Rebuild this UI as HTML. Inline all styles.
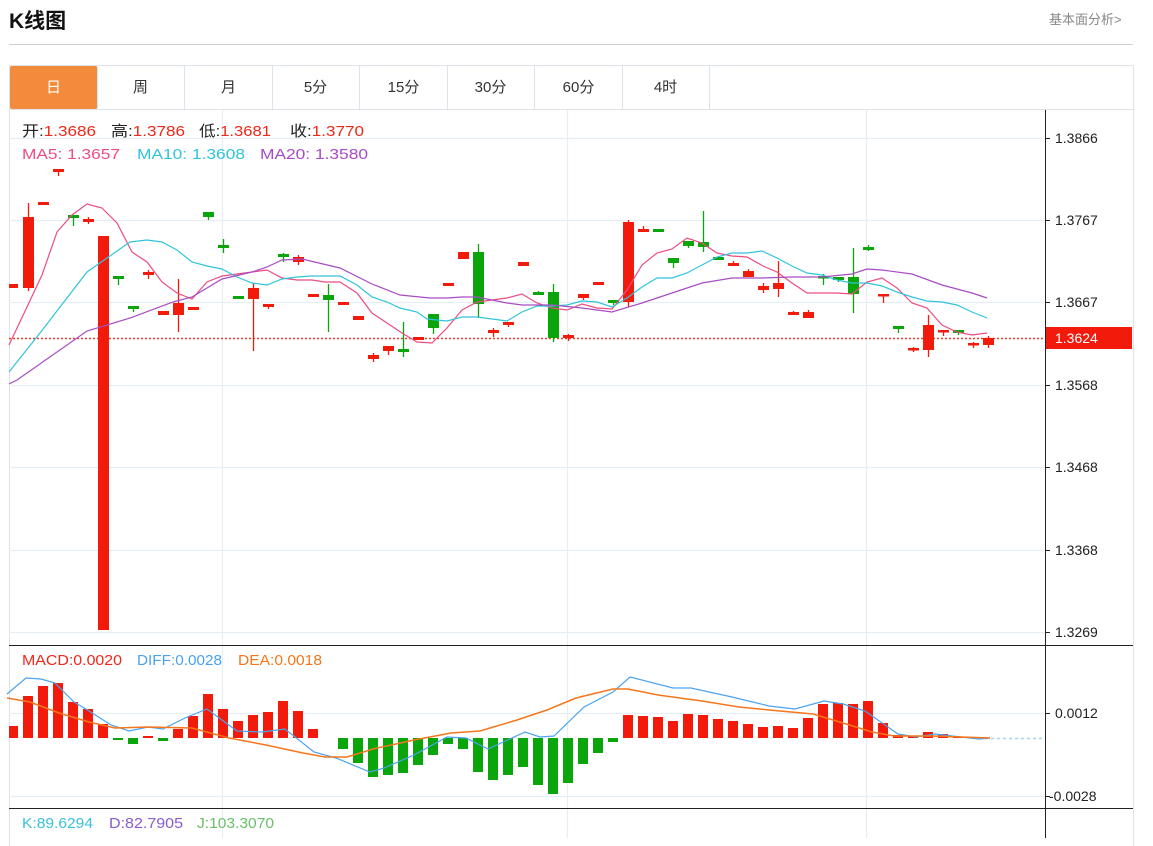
<!DOCTYPE html>
<html><head><meta charset="utf-8">
<style>
body{margin:0;background:#fff;width:1153px;height:838px;overflow:hidden;font-family:"Liberation Sans","Noto Sans CJK SC",sans-serif;position:relative}
.title{position:absolute;left:9px;top:5px;font-size:21px;font-weight:bold;color:#111;letter-spacing:0px}
.more{position:absolute;left:1049px;top:9px;font-size:13px;color:#888}
.hr{position:absolute;left:9px;top:44px;width:1124px;height:1px;background:#d0d0d0}
.box{position:absolute;left:9px;top:65px;width:1123px;height:780px;border:1px solid #dde3e8;border-bottom:none}
.tabs{position:absolute;left:9px;top:65px;height:44px;width:1124px;border-bottom:1px solid #dde3e8}
.tab{position:absolute;top:1px;height:43px;line-height:43px;text-align:center;font-size:15px;color:#333;border-right:1px solid #dde3e8;width:87px}
.tab.on{background:#f28c3c;color:#fff;border-radius:2px}
svg{position:absolute;left:0;top:0}
</style></head><body>
<div class="title">K线图</div>
<div class="more">基本面分析&gt;</div>
<div class="hr"></div>
<div class="box"></div>
<div class="tabs">
<div class="tab on" style="left:1px">日</div>
<div class="tab" style="left:88px">周</div>
<div class="tab" style="left:176px">月</div>
<div class="tab" style="left:263px">5分</div>
<div class="tab" style="left:351px">15分</div>
<div class="tab" style="left:438px">30分</div>
<div class="tab" style="left:526px">60分</div>
<div class="tab" style="left:613px">4时</div>
</div>
<svg id="s" width="1153" height="838" xmlns="http://www.w3.org/2000/svg" font-family="Liberation Sans, Noto Sans CJK SC, sans-serif"></svg>
<script>
var s=document.getElementById('s'),h='';
function L(x1,y1,x2,y2,c,w,d){h+='<line x1="'+x1+'" y1="'+y1+'" x2="'+x2+'" y2="'+y2+'" stroke="'+c+'" stroke-width="'+(w||1)+'"'+(d?' stroke-dasharray="'+d+'"':'')+'/>';}
function T(x,y,t,c,sz){h+='<text x="'+x+'" y="'+y+'" fill="'+c+'" font-size="'+(sz||14)+'">'+t+'</text>';}
function TL(x,y,t,c,len){h+='<text x="'+x+'" y="'+y+'" fill="'+c+'" font-size="15" textLength="'+len+'" lengthAdjust="spacingAndGlyphs">'+t+'</text>';}
function P(pts,c,w){h+='<polyline fill="none" stroke="'+c+'" stroke-width="'+(w||1.2)+'" points="'+pts+'"/>';}
var grid='#e6edf3';
[138,220,302,385,467,550,632,713,796].forEach(function(y){L(9,y+.5,1045,y+.5,grid,1.2);});
[222,567,866].forEach(function(x){L(x+.5,110,x+.5,838,grid,1.2);});
L(1045.5,110,1045.5,838,'#222',1);
L(9,645.5,1133,645.5,'#222',1);
L(9,808.5,1133,808.5,'#222',1);
var labs=[[138,'1.3866'],[220,'1.3767'],[302,'1.3667'],[385,'1.3568'],[467,'1.3468'],[550,'1.3368'],[632,'1.3269'],[713,'0.0012'],[796,'-0.0028']];
labs.forEach(function(a){L(1045,a[0]+.5,1050,a[0]+.5,'#222',1);T(a[1][0]=='-'?1049:1055,a[0]+5,a[1],'#222',14);});
L(9,338.5,1045,338.5,'#f03c2c',1.5,'2,2');
h+='<rect x="1046" y="327" width="86" height="22" fill="#f21a0a"/>';
T(1055,343,'1.3624','#fff',14);
var C=[[284,288,284,288,'r'],[217,288,203,291,'r'],[202,205,202,205,'r'],[169,172,169,176,'r'],[215,218,215,226,'g'],[219,222,217,224,'r'],[236,630,236,630,'r'],[276,279,276,285,'g'],[306,309,306,312,'g'],[272,275,270,279,'r'],[311,315,311,315,'r'],[303,315,279,332,'r'],[307,310,307,310,'r'],[212,217,212,220,'g'],[245,248,239,253,'g'],[296,299,296,299,'g'],[288,299,283,351,'r'],[304,307,304,309,'r'],[254,257,253,262,'g'],[257,262,255,265,'r'],[294,297,294,297,'r'],[295,300,284,332,'g'],[302,305,302,305,'r'],[316,320,316,320,'r'],[355,359,353,362,'r'],[346,351,346,355,'r'],[349,352,322,357,'g'],[337,340,337,340,'r'],[314,328,314,334,'g'],[283,286,283,286,'r'],[252,259,252,259,'r'],[252,304,244,318,'g'],[330,333,328,337,'r'],[322,325,322,327,'r'],[262,266,262,266,'r'],[292,295,291,295,'g'],[292,338,284,342,'g'],[335,338,334,341,'r'],[294,298,294,300,'r'],[282,285,282,285,'r'],[300,303,300,305,'g'],[222,302,220,307,'r'],[229,232,226,232,'r'],[229,232,229,232,'g'],[258,263,258,268,'g'],[241,246,241,248,'g'],[242,247,211,252,'g'],[257,260,257,260,'g'],[263,266,261,266,'r'],[271,277,269,277,'r'],[286,290,283,293,'r'],[283,289,261,297,'r'],[312,315,311,315,'r'],[312,318,310,318,'r'],[276,278,274,285,'g'],[277,280,277,282,'g'],[277,294,248,313,'g'],[247,250,245,251,'g'],[294,296,294,303,'r'],[326,329,326,333,'g'],[348,350,347,352,'r'],[325,350,315,357,'r'],[330,332,330,336,'r'],[330,333,330,335,'g'],[343,345,342,348,'r'],[338,345,336,348,'r']];
var RED='#f21a0a',GRN='#0aa50a';
C.forEach(function(c,i){var x=13+15*i,col=c[4]=='r'?RED:GRN;L(x+.5,c[2],x+.5,c[3],col,1.3);var x0=x-5,w=11;if(i==0){x0=9;w=9;}h+='<rect x="'+x0+'" y="'+c[0]+'" width="'+w+'" height="'+Math.max(2.5,c[1]-c[0])+'" fill="'+col+'"/>';});
P('9,345 27,307 42,275 57,232 72,215 87,204 102,208 117,223 132,252 147,262 162,282 177,293 192,299 207,282 222,276 252,272 267,270 282,278 297,280 312,280 325,282 340,282 357,293 372,313 387,323 402,333 417,342 432,343 447,328 462,310 477,302 492,300 507,298 522,294 537,303 552,308 567,310 582,304 597,308 612,309 627,290 642,265 657,253 672,249 687,238 702,243 717,253 732,256 747,257 763,266 777,272 792,283 807,293 822,293 837,293 852,294 867,282 882,278 897,288 912,303 927,308 942,325 957,332 972,335 987,333','#ec4d82');
P('9,372 40,333 87,272 130,242 147,240 162,242 177,250 192,262 207,266 222,269 237,277 252,283 267,285 282,279 297,277 312,276 340,276 357,285 372,297 387,302 400,308 417,312 427,319 447,321 462,317 477,317 507,321 522,312 537,306 552,306 567,305 582,301 597,302 612,307 627,298 642,287 657,278 672,278 687,273 702,265 717,257 732,253 747,253 762,251 777,258 792,266 807,273 822,275 837,280 852,283 867,283 882,286 897,292 912,297 927,301 942,302 957,305 972,312 987,318','#30c4dc');
P('9,384 17,380 87,331 130,318 173,302 192,297 222,279 252,272 267,267 282,260 302,259 340,268 372,284 400,295 430,298 447,298 462,297 477,297 507,303 522,305 552,305 582,308 612,312 642,303 672,293 702,283 732,278 762,278 792,277 822,277 852,274 867,269 882,270 912,274 942,285 972,293 987,298','#a84cc4');
// legend
h+='<text x="22" y="136" font-size="15" textLength="74" lengthAdjust="spacingAndGlyphs"><tspan fill="#222">开:</tspan><tspan fill="#f0281a">1.3686</tspan></text>';
h+='<text x="111" y="136" font-size="15" textLength="74" lengthAdjust="spacingAndGlyphs"><tspan fill="#222">高:</tspan><tspan fill="#f0281a">1.3786</tspan></text>';
h+='<text x="199" y="136" font-size="15" textLength="72" lengthAdjust="spacingAndGlyphs"><tspan fill="#222">低:</tspan><tspan fill="#f0281a">1.3681</tspan></text>';
h+='<text x="290" y="136" font-size="15" textLength="74" lengthAdjust="spacingAndGlyphs"><tspan fill="#222">收:</tspan><tspan fill="#f0281a">1.3770</tspan></text>';
TL(22,159,'MA5: 1.3657','#ec4d82',98);
TL(137,159,'MA10: 1.3608','#30c4dc',108);
TL(260,159,'MA20: 1.3580','#a84cc4',108);
var M=[726,696,686,683,702,709,724,740,744,736,741,729,716,694,709,721,715,712,701,711,729,738,749,763,777,775,773,765,755,744,749,772,780,775,767,785,794,783,764,753,742,715,716,717,721,714,715,719,721,724,727,726,728,718,704,703,704,701,723,735,736,732,734,737,738,738];
var Z=738;
M.forEach(function(v,i){var x=13+15*i;if(Math.abs(v-Z)<1)return;var y=Math.min(v,Z),hh=Math.abs(v-Z);var x0=x-5,w=10;if(i==0){x0=9;w=9;}h+='<rect x="'+x0+'" y="'+y+'" width="'+w+'" height="'+hh+'" fill="'+(v<Z?RED:GRN)+'"/>';});
L(985,738.5,1045,738.5,'#9fd8ea',1.5,'3,3');
P('7,694 26,678 41,679 55,683 74,702 89,711 111,725 129,731 148,727 163,729 185,718 207,709 222,720 237,731 262,732 285,729 314,752 336,758 370,772 384,768 414,755 447,737 466,738 488,749 525,732 540,737 554,736 584,707 613,692 630,677 673,688 691,688 732,697 769,706 795,709 824,701 843,704 865,711 898,734 916,737 935,734 961,737 979,739 990,738','#4aa3f0');
P('7,698 30,702 59,713 89,722 115,728 148,727 192,728 229,738 266,745 303,753 325,757 347,757 373,749 414,740 451,733 480,731 517,720 547,710 576,698 613,689 628,689 658,695 702,701 739,707 769,710 813,714 843,723 872,732 894,736 931,736 961,737 990,738','#f5761b',1.5);
TL(22,665,'MACD:0.0020','#f0281a',100);
TL(137,665,'DIFF:0.0028','#4aa3f0',85);
TL(238,665,'DEA:0.0018','#f5761b',84);
TL(22,828,'K:89.6294','#3cc0d8',71);
TL(109,828,'D:82.7905','#8a5ccf',74);
TL(197,828,'J:103.3070','#6abf69',77);
s.innerHTML=h;
</script>
</body></html>
